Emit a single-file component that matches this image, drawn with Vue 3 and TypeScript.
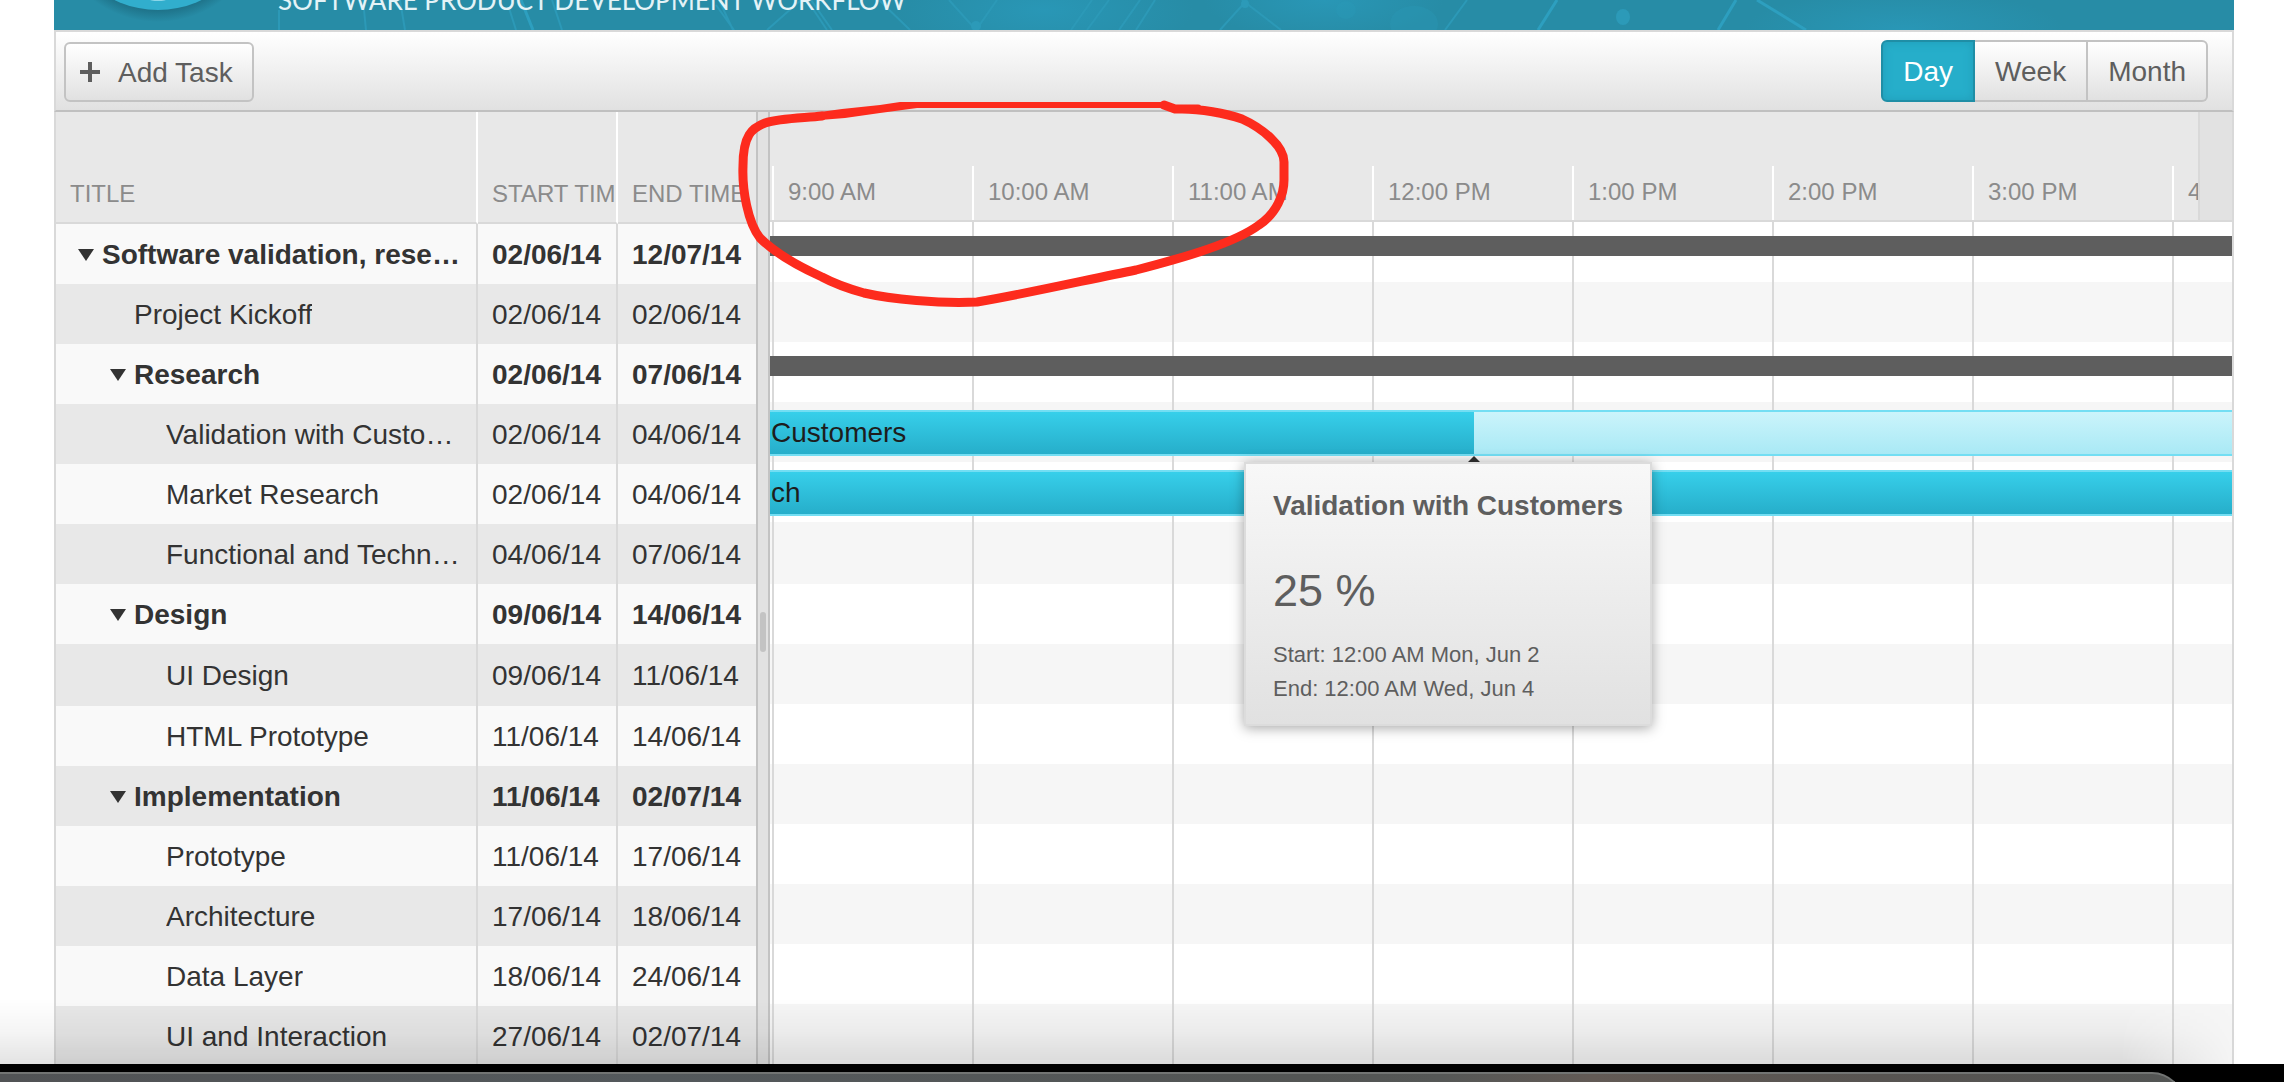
<script setup lang="ts">
import { ref } from 'vue'

interface Task {
  title: string
  level: number
  start: string
  end: string
  summary?: boolean
}

const tasks: Task[] = [
  { title: 'Software validation, rese…', level: 0, start: '02/06/14', end: '12/07/14', summary: true },
  { title: 'Project Kickoff', level: 1, start: '02/06/14', end: '02/06/14' },
  { title: 'Research', level: 1, start: '02/06/14', end: '07/06/14', summary: true },
  { title: 'Validation with Customers', level: 2, start: '02/06/14', end: '04/06/14' },
  { title: 'Market Research', level: 2, start: '02/06/14', end: '04/06/14' },
  { title: 'Functional and Techn…', level: 2, start: '04/06/14', end: '07/06/14' },
  { title: 'Design', level: 1, start: '09/06/14', end: '14/06/14', summary: true },
  { title: 'UI Design', level: 2, start: '09/06/14', end: '11/06/14' },
  { title: 'HTML Prototype', level: 2, start: '11/06/14', end: '14/06/14' },
  { title: 'Implementation', level: 1, start: '11/06/14', end: '02/07/14', summary: true },
  { title: 'Prototype', level: 2, start: '11/06/14', end: '17/06/14' },
  { title: 'Architecture', level: 2, start: '17/06/14', end: '18/06/14' },
  { title: 'Data Layer', level: 2, start: '18/06/14', end: '24/06/14' },
  { title: 'UI and Interaction', level: 2, start: '27/06/14', end: '02/07/14' },
]

const hours: string[] = ['9:00 AM', '10:00 AM', '11:00 AM', '12:00 PM', '1:00 PM', '2:00 PM', '3:00 PM', '4:00 PM']

type Bar = { kind: 'summary' } | { kind: 'task'; label: string; done?: number }
const bars: Record<number, Bar> = {
  0: { kind: 'summary' },
  2: { kind: 'summary' },
  3: { kind: 'task', label: 'Customers', done: 704 },
  4: { kind: 'task', label: 'ch' },
}

const views = ['Day', 'Week', 'Month']
const view = ref('Day')
</script>

<template>
  <div class="page">
    <div class="gantt">
      <header class="banner">
        <svg class="art" viewBox="0 0 2180 30" preserveAspectRatio="xMidYMid slice" aria-hidden="true">
          <defs>
            <radialGradient id="glow"><stop offset="0" stop-color="#2997b6" /><stop offset="1" stop-color="#2997b6" stop-opacity="0" /></radialGradient>
            <radialGradient id="shade"><stop offset=".86" stop-color="#1c6c82" /><stop offset="1" stop-color="#1c6c82" stop-opacity="0" /></radialGradient>
          </defs>
          <ellipse cx="990" cy="10" rx="150" ry="50" fill="url(#glow)" />
          <ellipse cx="1270" cy="0" rx="120" ry="40" fill="url(#glow)" />
          <ellipse cx="1850" cy="30" rx="160" ry="40" fill="url(#glow)" />
          <g stroke="#2c99b7" stroke-width="2" fill="none">
            <path d="M225 10V30M309 0L312 30M346 0L351 30M455 8L462 30M498 0L508 30M662 5L680 30M665 0L679 30M747 0L713 30M753 0L773 30M757 0L778 30M825 0L856 30M895 0L922 30M943 0L922 30M1038 0L1017 30M1055 0L1033 30M1086 0L1065 30M1101 0L1082 30M1193 0L1166 30M1188 0L1227 30M1413 0L1391 30" />
            <path d="M467 0L479 30M1503 0L1484 30M1682 0L1664 30M1703 0L1752 30" stroke="#2d9fbf" stroke-width="3" />
          </g>
          <g fill="#2c9ab8">
            <circle cx="922" cy="26" r="5" /><circle cx="1191" cy="4" r="4" /><ellipse cx="1569" cy="17" rx="7" ry="8" />
            <ellipse cx="1292" cy="10" rx="10" ry="9" opacity=".3" /><ellipse cx="1360" cy="24" rx="24" ry="18" opacity=".3" />
          </g>
          <circle cx="104" cy="-86" r="108" fill="url(#shade)" />
          <circle cx="104" cy="-90" r="100" fill="#31aecd" />
          <ellipse cx="104" cy="-1" rx="9" ry="2" fill="#8bd6e8" />
        </svg>
        <h1>SOFTWARE PRODUCT DEVELOPMENT WORKFLOW</h1>
      </header>

      <div class="toolbar">
        <button class="btn add" type="button">
          <svg width="20" height="20" viewBox="0 0 20 20" aria-hidden="true"><path d="M10 0V20M0 10H20" stroke="#5e5e5e" stroke-width="4" /></svg>
          <span>Add Task</span>
        </button>
        <div class="views">
          <button v-for="v in views" :key="v" class="btn" :class="{ active: v === view }" type="button" @click="view = v"><span>{{ v }}</span></button>
        </div>
      </div>

      <div class="body">
        <table class="tree">
          <colgroup><col class="c-title" /><col class="c-start" /><col class="c-end" /></colgroup>
          <thead>
            <tr><th scope="col">TITLE</th><th scope="col">START TIME</th><th scope="col">END TIME</th></tr>
          </thead>
          <tbody>
            <tr v-for="(t, i) in tasks" :key="t.title" :class="{ bold: t.summary, tall: i === 7 }">
              <td>
                <div class="name" :style="{ paddingLeft: t.level * 32 + 'px' }">
                  <span class="toggle">
                    <svg v-if="t.summary" width="16" height="12" viewBox="0 0 16 12" aria-hidden="true"><path d="M0 0H16L8 12Z" fill="#333" /></svg>
                  </span>
                  <span class="label">{{ t.title }}</span>
                </div>
              </td>
              <td>{{ t.start }}</td>
              <td>{{ t.end }}</td>
            </tr>
          </tbody>
        </table>

        <div class="splitter"><div class="handle"></div></div>

        <div class="timeline">
          <div class="head">
            <div class="hours"><div v-for="h in hours" :key="h" class="hour">{{ h }}</div></div>
            <div class="corner"></div>
          </div>
          <div v-for="(t, i) in tasks" :key="t.title" class="lane" :class="{ tall: i === 5 }">
            <template v-if="bars[i]">
              <div v-if="bars[i].kind === 'summary'" class="summary"></div>
              <div v-else class="bar">
                <div class="done" :style="{ width: bars[i].done ? bars[i].done + 'px' : '100%' }">{{ bars[i].label }}</div>
              </div>
            </template>
          </div>

          <div class="tip">
            <strong>Validation with Customers</strong>
            <div class="percent">25 %</div>
            <div class="when">Start: 12:00 AM Mon, Jun 2</div>
            <div class="when">End: 12:00 AM Wed, Jun 4</div>
          </div>
        </div>
      </div>
    </div>

    <div class="shadow"></div>
    <footer class="dock"><div class="tray"></div></footer>

    <svg class="marker" width="560" height="220" viewBox="735 95 560 220" aria-hidden="true">
      <path fill="#fd2b1d" d="M820 112L842 109L880 105L900 102H1165V108H917L880 113L845 118L820 120Z" />
      <path fill="none" stroke="#fd2b1d" stroke-width="9" stroke-linecap="round" stroke-linejoin="round" d="M1164 105L1175 109L1198 109M1182 109C1200 109 1225 113 1242 119C1262 128 1284 146 1284 162V180C1284 194 1277 213 1259 225C1236 242 1190 256 1136 270C1090 279 1030 293 977 302C940 304 890 299 864 293C846 288 835 284 822 277C800 267 775 253 760 238C748 223 742 190 743 166C743 135 752 128 765 123C780 118 805 118 822 116" />
    </svg>
  </div>
</template>

<style>
body {
  background: #fff;
}
</style>

<style scoped>
.page {
  position: relative;
  display: flex;
  flex-direction: column;
  height: 100vh;
  overflow: hidden;
  font: 28px 'Liberation Sans', Arial, sans-serif;
  color: #333;
}
.gantt {
  flex: 1;
  min-height: 0;
  display: flex;
  flex-direction: column;
  overflow: hidden;
  margin: 0 50px 0 54px;
}
.banner {
  position: relative;
  flex: none;
  height: 30px;
  overflow: hidden;
  background: #278ca6;
}
.art {
  display: block;
  width: 100%;
  height: 30px;
}
h1 {
  position: absolute;
  left: 224px;
  bottom: 14px;
  margin: 0;
  font: 26px/32px Lato, sans-serif;
  color: #e4f3f7;
  white-space: nowrap;
}
.toolbar {
  flex: none;
  display: flex;
  justify-content: space-between;
  align-items: flex-end;
  box-sizing: border-box;
  height: 82px;
  padding: 0 24px 8px 8px;
  border: 2px solid #d9d9d9;
  border-bottom-color: #c0c0c0;
  background: linear-gradient(#fff, #e1e1e1);
}
.btn {
  display: flex;
  align-items: center;
  height: 62px;
  margin: 0;
  padding: 2px 20px 0;
  border: 2px solid #c3c3c3;
  background: linear-gradient(#fff, #e1e1e1);
  color: #5e5e5e;
  font: inherit;
  white-space: nowrap;
}
.add {
  height: 60px;
  gap: 18px;
  padding: 0 19px 0 14px;
  border-radius: 6px;
}
.add span {
  padding-top: 2px;
}
.views {
  display: flex;
}
.views .btn {
  border-left-width: 0;
}
.views .btn:first-child {
  border-left-width: 2px;
  border-radius: 6px 0 0 6px;
}
.views .btn:last-child {
  border-radius: 0 6px 6px 0;
}
.views .active {
  border-color: #1f8ea6;
  background: #26aeca;
  box-shadow: inset 0 0 10px #219db8;
  color: #fff;
}
.body {
  flex: 1;
  min-height: 0;
  display: flex;
  overflow: hidden;
  border: solid #d9d9d9;
  border-width: 0 2px;
}
.tree {
  flex: none;
  align-self: flex-start;
  width: 700px;
  table-layout: fixed;
  border-collapse: separate;
  border-spacing: 0;
}
.c-title {
  width: 422px;
}
.c-start {
  width: 140px;
}
.c-end {
  width: 138px;
}
th,
td {
  box-sizing: border-box;
  padding: 0 0 0 14px;
  border-right: 2px solid #d9d9d9;
  overflow: hidden;
  text-align: left;
  white-space: nowrap;
}
th:last-child,
td:last-child {
  border-right: 0;
}
th {
  height: 112px;
  border-right-color: #fff;
  border-bottom: 2px solid #d9d9d9;
  background: #e8e8e8;
  color: #8b8b8b;
  font-size: 24px;
  font-weight: 400;
  line-height: 56px;
  vertical-align: bottom;
}
td {
  height: 60px;
  padding-top: 2px;
  background: #f9f9f9;
  line-height: 58px;
}
tr:nth-child(even) td {
  background: #e8e8e8;
}
.tall td {
  height: 62px;
}
.bold td {
  font-weight: 700;
}
.name {
  display: flex;
  align-items: center;
  padding-right: 14px;
}
.toggle {
  flex: none;
  display: flex;
  width: 24px;
  padding-left: 8px;
}
.label {
  min-width: 0;
  overflow: hidden;
  text-overflow: ellipsis;
}
.splitter {
  flex: none;
  width: 10px;
  border: solid #c3c3c3;
  border-width: 0 2px;
  background: #e2e2e2;
}
.handle {
  width: 6px;
  height: 40px;
  margin: 500px 0 0 2px;
  border-radius: 3px;
  background: #c3c3c3;
}
.timeline {
  position: relative;
  flex: 1;
  min-width: 0;
  overflow: hidden;
}
.head {
  display: flex;
  box-sizing: border-box;
  height: 110px;
  border-bottom: 2px solid #d9d9d9;
  background: #e8e8e8;
}
.hours {
  flex: 1;
  min-width: 0;
  display: flex;
  align-items: flex-end;
  overflow: hidden;
  padding-left: 2px;
  color: #8b8b8b;
  font-size: 24px;
}
.hour {
  flex: none;
  box-sizing: border-box;
  width: 200px;
  height: 54px;
  padding-left: 14px;
  border-left: 2px solid #fff;
  line-height: 52px;
}
.corner {
  flex: none;
  width: 32px;
  border-left: 2px solid #d9d9d9;
  background: #e2e2e2;
}
.lane {
  box-sizing: border-box;
  height: 60px;
  padding-top: 8px;
  background: repeating-linear-gradient(90deg, #d9d9d9 0 2px, transparent 2px 200px) 2px 0 / 200px 100% #fff;
}
.lane:nth-child(odd) {
  background-color: #f6f6f6;
}
.lane.tall {
  height: 62px;
}
.summary {
  height: 20px;
  margin-top: 6px;
  background: #5e5e5e;
}
.bar {
  box-sizing: border-box;
  height: 46px;
  border: solid #73def3;
  border-width: 2px 0;
  background: linear-gradient(#cbf4fb, #a9e9f5);
}
.done {
  height: 42px;
  background: linear-gradient(#37cfea, #26aeca);
  color: #1d1d1d;
  line-height: 42px;
  text-indent: 1px;
}
.tip {
  position: absolute;
  top: 350px;
  left: 474px;
  box-sizing: border-box;
  width: 408px;
  height: 264px;
  padding: 24px 26px 0 27px;
  border: 2px solid #dcdcdc;
  background: linear-gradient(#f8f8f8, #e1e1e1);
  box-shadow: 0 2px 12px rgba(0, 0, 0, 0.35);
  color: #5e5e5e;
  white-space: nowrap;
}
.tip::before {
  content: '';
  position: absolute;
  top: -8px;
  left: 222px;
  border: solid transparent;
  border-width: 0 6px 6px;
  border-bottom-color: #2b2b2b;
}
.tip strong {
  display: block;
  line-height: 36px;
}
.percent {
  margin: 37px 0 17px;
  font-size: 45px;
  line-height: 60px;
}
.when {
  font-size: 22px;
  line-height: 34px;
}
.shadow {
  position: absolute;
  right: 44px;
  bottom: 18px;
  left: 0;
  height: 66px;
  background: linear-gradient(transparent, rgba(0, 0, 0, 0.04) 50%, rgba(0, 0, 0, 0.11));
  mask-image: linear-gradient(270deg, transparent, #000 120px);
  pointer-events: none;
}
.dock {
  flex: none;
  height: 10px;
  padding: 8px 100px 0 0;
  overflow: hidden;
  background: #000;
}
.tray {
  height: 40px;
  border: solid #727473;
  border-width: 2px 2px 0 0;
  border-radius: 0 32px 0 0;
  background: linear-gradient(90deg, #515355, #54595c 30%, #535554 60%, #555756 66%, #625a55 73%, #575451 86%, #535554);
}
.marker {
  position: absolute;
  top: 95px;
  left: 735px;
  pointer-events: none;
}
</style>
